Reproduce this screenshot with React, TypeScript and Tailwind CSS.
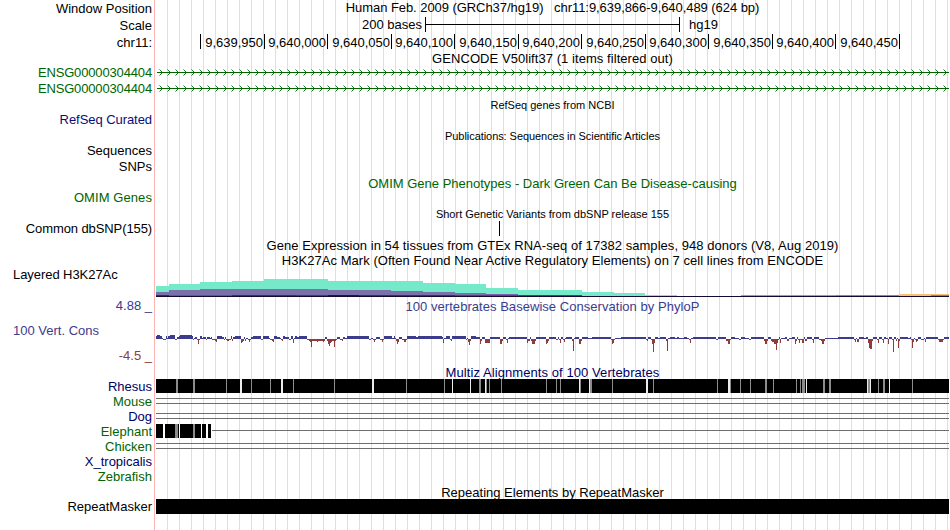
import React from 'react';

// x positions are genome-image pixels; the tracks start at 156
const TRACK_START = 156;
const TRACK_WIDTH = 793;

const ticks = [
  { label: '9,639,950', width: 64 },
  { label: '9,640,000', width: 63 },
  { label: '9,640,050', width: 64 },
  { label: '9,640,100', width: 63 },
  { label: '9,640,150', width: 64 },
  { label: '9,640,200', width: 63 },
  { label: '9,640,250', width: 64 },
  { label: '9,640,300', width: 63 },
  { label: '9,640,350', width: 64 },
  { label: '9,640,400', width: 63 },
  { label: '9,640,450', width: 64 },
];

// [start, end, height above the base line, color]
const h3k27ac: [number, number, number, string][] = [
  [156, 169, 10, '#77e9cb'],
  [169, 200, 12, '#77e9cb'],
  [200, 232, 14, '#77e9cb'],
  [232, 264, 15, '#77e9cb'],
  [264, 328, 17, '#77e9cb'],
  [328, 423, 15, '#77e9cb'],
  [423, 455, 13, '#77e9cb'],
  [455, 486, 12, '#77e9cb'],
  [486, 518, 8, '#77e9cb'],
  [518, 582, 6, '#77e9cb'],
  [582, 614, 4, '#77e9cb'],
  [614, 645, 3, '#77e9cb'],
  [645, 677, 1, '#77e9cb'],
  [156, 169, 4, '#7a71ab'],
  [169, 200, 6, '#7a71ab'],
  [200, 328, 7, '#7a71ab'],
  [328, 391, 6, '#7a71ab'],
  [391, 423, 5, '#7a71ab'],
  [423, 455, 4, '#7a71ab'],
  [455, 486, 3, '#7a71ab'],
  [486, 518, 2, '#7f5fb4'],
  [156, 169, 1, '#54204c'],
  [169, 200, 1, '#7d5665'],
  [200, 232, 1, '#3b5fb0'],
  [232, 296, 1, '#2b2bb0'],
  [296, 328, 1, '#2c4c58'],
  [328, 359, 1, '#1e1644'],
  [359, 455, 1, '#2b2bb0'],
  [455, 518, 1, '#6c2fa4'],
  [518, 582, 1, '#5a2fb0'],
  [741, 836, 1, '#ee6fc4'],
  [836, 899, 1, '#f4605a'],
  [899, 949, 2, '#f8c070'],
  [931, 949, 1, '#f4602a'],
];

// [start, end, score]
const phyloP: [number, number, number][] = [
  [156, 157, 3], [157, 160, 4], [160, 162, 3], [162, 163, 1], [163, 166, -1],
  [166, 167, 3], [167, 168, 1], [168, 170, 3], [170, 175, 4], [175, 177, -1],
  [177, 179, 2], [179, 180, 3], [180, 192, 4], [192, 193, 3], [193, 194, -1],
  [194, 195, 1], [195, 197, 2], [197, 198, -1], [198, 199, -5], [199, 200, -1],
  [200, 202, 3], [202, 203, 1], [203, 206, 2], [206, 207, -1], [207, 210, 2],
  [210, 211, 1], [211, 212, 2], [212, 215, -1], [215, 216, -2], [216, 217, -3],
  [217, 222, 3], [222, 224, 2], [224, 225, -1], [225, 226, 2], [226, 227, -1],
  [227, 229, -2], [229, 231, -1], [231, 232, 3], [232, 233, -2], [233, 235, 2],
  [235, 241, 3], [241, 242, -4], [242, 243, -3], [243, 244, -2], [244, 245, 2],
  [245, 246, -2], [246, 248, 1], [248, 249, -1], [249, 250, -3], [250, 251, -1],
  [251, 253, 2], [253, 261, 3], [261, 263, -1], [263, 269, 3], [269, 270, 1],
  [270, 272, -1], [272, 273, -2], [273, 274, -3], [274, 277, 3], [277, 280, 2],
  [280, 281, 1], [281, 282, -1], [282, 283, -2], [283, 285, 3], [285, 289, 2],
  [289, 291, -1], [291, 293, 3], [293, 294, -4], [294, 295, 1], [295, 297, 3],
  [297, 299, 2], [299, 307, 3], [307, 309, -1], [309, 310, -2], [310, 311, -3],
  [311, 312, -8], [312, 317, -2], [317, 318, -3], [318, 320, -2], [320, 323, -2],
  [323, 324, -3], [324, 325, -2], [325, 327, 2], [327, 328, -2], [328, 329, -5],
  [329, 330, -7], [330, 331, -4], [331, 332, -3], [332, 334, -2], [334, 335, -8],
  [335, 336, -2], [336, 337, -1], [337, 340, 2], [340, 342, -1], [342, 343, -2],
  [343, 345, 2], [345, 347, 1], [347, 369, 3], [369, 371, -1], [371, 373, 1],
  [373, 374, -1], [374, 375, -3], [375, 376, -1], [376, 380, 2], [380, 382, -1],
  [382, 383, -3], [383, 384, -1], [384, 392, 3], [392, 394, 1], [394, 395, 3],
  [395, 396, 1], [396, 397, -2], [397, 398, -5], [398, 399, -3], [399, 402, 2],
  [402, 404, -1], [404, 406, -3], [406, 407, -1], [407, 416, 3], [416, 418, 2],
  [418, 442, 3], [442, 443, 2], [443, 444, -4], [444, 446, 1], [446, 450, 3],
  [450, 451, -1], [451, 452, -2], [452, 466, 3], [466, 467, -1], [467, 468, 1],
  [468, 469, -3], [469, 470, -6], [470, 471, -2], [471, 476, 3], [476, 480, 2],
  [480, 481, -5], [481, 482, -2], [482, 485, 2], [485, 490, -4], [490, 500, 2],
  [500, 502, -5], [502, 503, -2], [503, 506, 2], [506, 507, -1], [507, 508, -4],
  [508, 509, 1], [509, 527, 2], [527, 528, -4], [528, 530, -2], [530, 531, 2],
  [531, 532, -2], [532, 535, -5], [535, 536, -2], [536, 546, 2], [546, 547, -5],
  [547, 548, -4], [548, 549, -2], [549, 556, 2], [556, 558, -1], [558, 559, 2],
  [559, 560, -1], [560, 561, -4], [561, 563, 2], [563, 564, -1], [564, 565, -3],
  [565, 566, 1], [566, 572, 2], [572, 573, -2], [573, 574, -12], [574, 575, 1],
  [575, 579, 2], [579, 581, -5], [581, 582, -2], [582, 588, 2], [588, 592, 1],
  [592, 611, 2], [611, 612, -1], [612, 613, -5], [613, 614, -4], [614, 615, -1],
  [615, 621, 1], [621, 646, 2], [646, 647, -1], [647, 648, -2], [648, 651, 2],
  [651, 652, -1], [652, 653, -5], [653, 654, -13], [654, 655, -4], [655, 658, 2],
  [658, 660, 1], [660, 666, 2], [666, 667, -2], [667, 668, -12], [668, 670, 1],
  [670, 675, 2], [675, 677, 1], [677, 679, 2], [679, 684, 1], [684, 687, 2],
  [687, 689, 1], [689, 690, -1], [690, 691, -4], [691, 693, 1], [693, 716, 2],
  [716, 718, -1], [718, 726, 2], [726, 728, -2], [728, 730, -5],
  [730, 731, -1], [731, 735, 2], [735, 739, 1], [739, 741, -1], [741, 745, 2],
  [745, 749, 1], [749, 751, -1], [751, 764, 2], [764, 765, -2], [765, 767, -5],
  [767, 768, -2], [768, 771, 2], [771, 772, -2], [772, 774, -3], [774, 776, -5],
  [776, 777, -11], [777, 778, -4], [778, 779, -1], [779, 780, 2], [780, 781, -4],
  [781, 785, 1], [785, 787, 2], [787, 789, -2], [789, 792, 1], [792, 795, 2],
  [795, 796, -5], [796, 797, -2], [797, 798, 2], [798, 799, -1], [799, 800, -4],
  [800, 802, -1], [802, 804, -4], [804, 805, 2], [805, 807, -2], [807, 812, 2],
  [812, 813, -1], [813, 814, -4], [814, 819, 2], [819, 821, -1], [821, 822, -2],
  [822, 824, -5], [824, 825, -2], [825, 838, 1], [838, 854, 2], [854, 855, -1],
  [855, 856, -3], [856, 857, 1], [857, 859, -3], [859, 864, 2],
  [864, 866, 1], [866, 868, 2], [868, 869, -4], [869, 870, -9], [870, 872, -10],
  [872, 873, -2], [873, 877, 2], [877, 878, -1], [878, 879, -4], [879, 882, 2],
  [882, 883, -1], [883, 884, -4], [884, 886, 2], [886, 888, 1], [888, 889, -5],
  [889, 892, 2], [892, 893, -1], [893, 894, -13], [894, 896, 2], [896, 897, -2],
  [897, 898, 1], [898, 899, -9], [899, 900, -2], [900, 908, 2], [908, 910, 1],
  [910, 911, 2], [911, 912, -1], [912, 913, -9], [913, 914, -3], [914, 915, 1],
  [915, 916, -1], [916, 917, -3], [917, 918, -2], [918, 921, 2], [921, 924, -1],
  [924, 925, 1], [925, 926, -3], [926, 938, 2], [938, 939, -1], [939, 943, -3],
  [943, 944, -1], [944, 949, 2],
];

// breaks in the alignment: [x, width], light = unaligned, dark = weak match
const rhesusLight = [
  [240, 2], [281, 2], [372, 2], [452, 1], [470, 1], [485, 1], [579, 1], [589, 1],
  [646, 2], [728, 2], [806, 1], [867, 1], [870, 1], [889, 1],
];
const rhesusDark = [
  [176, 2], [193, 2], [226, 1], [251, 1], [270, 1], [293, 1], [334, 1], [406, 1],
  [444, 1], [479, 2], [486, 1], [489, 1], [501, 1], [546, 1], [556, 1], [560, 1],
  [580, 1], [590, 2], [612, 1], [653, 1], [717, 1], [730, 1], [740, 1], [750, 1],
  [765, 2], [773, 1], [796, 1], [800, 1], [802, 3], [823, 2], [829, 2], [868, 2],
  [878, 1], [883, 2], [912, 1],
];
const elephantBlocks = [[156, 7], [165, 14], [180, 21], [202, 4], [208, 3]];
const elephantDark = [[175, 3], [193, 2]];

interface RowProps {
  height: string;
  label?: string;
  labelClass?: string;
  children?: React.ReactNode;
}

const Row: React.FC<RowProps> = ({ height, label, labelClass = '', children }) => (
  <div className={`flex shrink-0 ${height}`}>
    <div className={`flex w-[156px] shrink-0 items-center justify-end pr-1 whitespace-nowrap ${labelClass}`}>
      {label}
    </div>
    <div className="flex min-w-0 flex-1 items-center justify-center pr-px whitespace-pre">{children}</div>
  </div>
);

const Track: React.FC<{ height: number; children: React.ReactNode }> = ({ height, children }) => (
  <svg
    width={TRACK_WIDTH}
    height={height}
    viewBox={`${TRACK_START} 0 ${TRACK_WIDTH} ${height}`}
    shapeRendering="crispEdges"
    className="block shrink-0"
  >
    {children}
  </svg>
);

const GeneArrows: React.FC = () => (
  <Track height={7}>
    {Array.from({ length: 99 }, (_, i) => 162 + i * 8).map(x => (
      <path
        key={x}
        d={`M${x - 2.5} 0.5L${x + 0.5} 3.5L${x - 2.5} 6.5`}
        fill="none"
        stroke="#006400"
        strokeWidth={0.9}
        shapeRendering="auto"
      />
    ))}
    <rect x={157} y={3} width={792} height={1} fill="#006400" />
  </Track>
);

const DoubleLine: React.FC = () => (
  <Track height={15}>
    <rect x={156} y={4} width={793} height={1} fill="#6e6e6e" />
    <rect x={156} y={9} width={793} height={1} fill="#6e6e6e" />
  </Track>
);

const Bars: React.FC<{ items: number[][]; fill: string }> = ({ items, fill }) => (
  <>
    {items.map(([x, w]) => (
      <rect key={x} x={x} y={0} width={w} height={14} fill={fill} />
    ))}
  </>
);

export default function App() {
  return (
    <div className="flex h-[530px] w-[950px] overflow-hidden bg-white bg-[linear-gradient(to_right,transparent_154px,#ffb4b4_154px,#ffb4b4_155px,white_155px,white_156px,transparent_156px),repeating-linear-gradient(to_right,#dcdcf8_0px,#dcdcf8_1px,transparent_1px,transparent_12px)] bg-[position:0_0,167px_0] bg-no-repeat font-['Liberation_Sans',Arial,sans-serif] text-[13px] leading-none text-black">
      <div className="flex w-full flex-col">
        <Row height="h-4" label="Window Position">
          <span className="pb-0.5 tracking-[-0.06px]">
            {'Human Feb. 2009 (GRCh37/hg19)   chr11:9,639,866-9,640,489 (624 bp)'}
          </span>
        </Row>
        <Row height="h-[18px]" label="Scale">
          <div className="flex h-full w-full items-start pt-px pl-[206px] leading-[15px]">
            <span className="w-[59px]">200 bases</span>
            <div className="ml-1 flex h-[15px] w-[255px] items-center border-x border-black">
              <div className="h-px w-full bg-black" />
            </div>
            <span className="ml-[9px]">hg19</span>
          </div>
        </Row>
        <Row height="h-[17px]" label="chr11:">
          <div className="flex h-full w-full items-start">
            <div className="h-[15px] w-[45px] shrink-0 border-r border-black" />
            {ticks.map(tick => (
              <div
                key={tick.label}
                className="flex h-[15px] shrink-0 items-end justify-end border-r border-black pt-[3px] pr-px"
                style={{ width: tick.width }}
              >
                {tick.label}
              </div>
            ))}
          </div>
        </Row>
        <Row height="h-3.5"><span className="pt-px tracking-[0.06px]">GENCODE V50lift37 (1 items filtered out)</span></Row>
        <Row height="h-[15px]" label="ENSG00000304404" labelClass="text-[#006400] tracking-[-0.15px]">
          <GeneArrows />
        </Row>
        <Row height="h-[17px]" label="ENSG00000304404" labelClass="text-[#006400] tracking-[-0.15px]">
          <GeneArrows />
        </Row>
        <Row height="h-4"><span className="text-[11px]">RefSeq genes from NCBI</span></Row>
        <Row height="h-[15px]" label="RefSeq Curated" labelClass="text-[#0c0c78] pb-0.5 tracking-[-0.06px]" />
        <Row height="h-4"><span className="text-[11px] tracking-[-0.06px]">Publications: Sequences in Scientific Articles</span></Row>
        <Row height="h-[15px]" label="Sequences" labelClass="pb-0.5" />
        <Row height="h-[17px]" label="SNPs" labelClass="pb-0.5" />
        <Row height="h-[15px]"><span className="text-[#006400]">OMIM Gene Phenotypes - Dark Green Can Be Disease-causing</span></Row>
        <Row height="h-[15px]" label="OMIM Genes" labelClass="text-[#006400] pb-0.5 tracking-[0.08px]" />
        <Row height="h-[15px]"><span className="pt-0.5 text-[11px]">Short Genetic Variants from dbSNP release 155</span></Row>
        <Row height="h-[15px]" label="Common dbSNP(155)" labelClass="tracking-[-0.1px]">
          <Track height={15}>
            <rect x={499} y={0} width={1} height={15} fill="black" />
          </Track>
        </Row>
        <Row height="h-[17px]">
          <span className="pt-0.5 tracking-[0.05px]">
            Gene Expression in 54 tissues from GTEx RNA-seq of 17382 samples, 948 donors (V8, Aug 2019)
          </span>
        </Row>
        <Row height="h-[15px]">
          <span className="tracking-[0.045px]">
            H3K27Ac Mark (Often Found Near Active Regulatory Elements) on 7 cell lines from ENCODE
          </span>
        </Row>

        <Row height="h-8" label="Layered H3K27Ac" labelClass="justify-start! items-start! pl-[13px] tracking-[-0.06px]">
          <Track height={32}>
            {h3k27ac.map(([start, end, h, fill], i) => (
              <rect key={i} x={start} y={28 - h} width={end - start} height={h} fill={fill} />
            ))}
            <rect x={156} y={28} width={793} height={1} fill="#140a32" />
          </Track>
        </Row>

        {/* Conservation wiggle */}
        <div className="flex h-[66px] shrink-0 text-[#3c3c8c]">
          <div className="-mt-px flex w-[156px] shrink-0 flex-col">
            <div className="h-[25px] pr-1 text-right">4.88 _</div>
            <div className="h-[25px] pl-[13px]">100 Vert. Cons</div>
            <div className="pr-1 text-right text-[#8c3c3c]">-4.5 _</div>
          </div>
          <div className="flex flex-col">
            <div className="flex h-[15px] justify-center tracking-[0.04px]">
              100 vertebrates Basewise Conservation by PhyloP
            </div>
            <Track height={51}>
              {phyloP.map(([start, end, score]) => (
                <rect
                  key={start}
                  x={start}
                  y={score > 0 ? 24 - score : 24}
                  width={end - start}
                  height={Math.abs(score)}
                  fill={score > 0 ? '#3c3c8c' : '#8c3c3c'}
                />
              ))}
            </Track>
          </div>
        </div>

        {/* Multiz alignments */}
        <Row height="h-[13px]"><span className="tracking-[0.08px] text-[#000064]">Multiz Alignments of 100 Vertebrates</span></Row>
        <Row height="h-[15px]" label="Rhesus" labelClass="text-[#000064]">
          <Track height={15}>
            <rect x={156} y={0} width={793} height={14} fill="black" />
            <Bars items={rhesusLight} fill="#ececec" />
            <Bars items={rhesusDark} fill="#8c8c8c" />
          </Track>
        </Row>
        <Row height="h-[15px]" label="Mouse" labelClass="text-[#006400]"><DoubleLine /></Row>
        <Row height="h-[15px]" label="Dog" labelClass="text-[#000064]"><DoubleLine /></Row>
        <Row height="h-[15px]" label="Elephant" labelClass="text-[#006400]">
          <Track height={15}>
            <rect x={156} y={0} width={56} height={14} fill="white" />
            <Bars items={elephantBlocks} fill="black" />
            <Bars items={elephantDark} fill="#8c8c8c" />
            <rect x={212} y={6} width={737} height={1} fill="#6e6e6e" />
          </Track>
        </Row>
        <Row height="h-[15px]" label="Chicken" labelClass="text-[#006400]"><DoubleLine /></Row>
        <Row height="h-[15px]" label="X_tropicalis" labelClass="text-[#000064]" />
        <Row height="h-[15px]" label="Zebrafish" labelClass="text-[#006400]" />
        <Row height="h-[15px]"><span className="pt-0.5">Repeating Elements by RepeatMasker</span></Row>
        <Row height="h-[15px]" label="RepeatMasker">
          <Track height={15}>
            <rect x={156} y={0} width={793} height={15} fill="black" />
          </Track>
        </Row>
      </div>
    </div>
  );
}
